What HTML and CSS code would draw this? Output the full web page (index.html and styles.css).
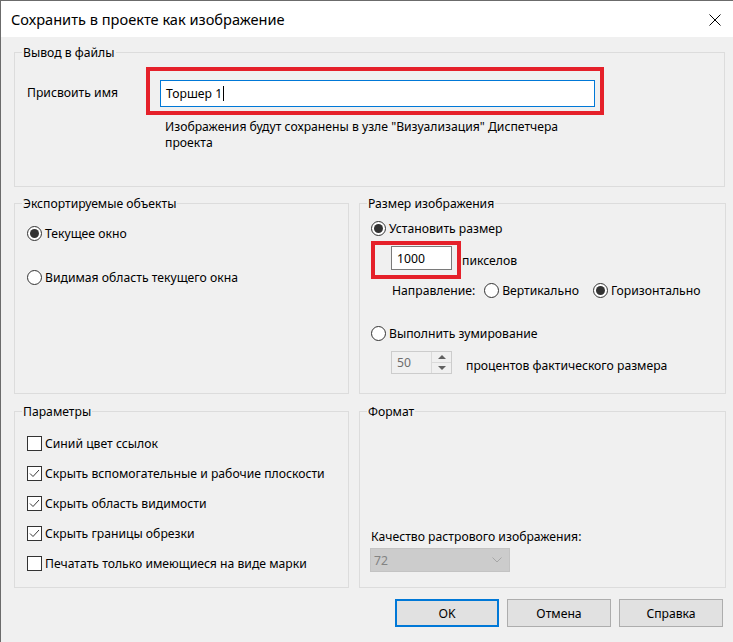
FILE: index.html
```html
<!DOCTYPE html>
<html lang="ru">
<head>
<meta charset="utf-8">
<title>Сохранить в проекте как изображение</title>
<link rel="stylesheet" href="styles.css">
</head>
<body>
<div class="window">
  <header class="titlebar">
    <span class="title">Сохранить в проекте как изображение</span>
    <svg class="close" width="12" height="12" viewBox="0 0 12 12"><path d="M0.5 0.5L11.5 11.5M11.5 0.5L0.5 11.5" stroke="#000" stroke-width="1" fill="none"/></svg>
  </header>
  <main class="content">
    <fieldset class="group group-output">
      <legend>Вывод в файлы</legend>
      <div class="output-body">
        <div class="name-row">
          <span class="name-label">Присвоить имя</span>
          <div class="hl hl-name">
            <div class="textbox name-box">Торшер 1<span class="caret"></span></div>
          </div>
        </div>
        <p class="hint">Изображения будут сохранены в узле "Визуализация" Диспетчера<br>проекта</p>
      </div>
    </fieldset>

    <div class="grid">
      <fieldset class="group">
        <legend>Экспортируемые объекты</legend>
        <div class="export-body">
          <div class="opt"><span class="radio checked"></span><span class="opt-text">Текущее окно</span></div>
          <div class="opt opt-second"><span class="radio"></span><span class="opt-text">Видимая область текущего окна</span></div>
        </div>
      </fieldset>

      <fieldset class="group">
        <legend>Размер изображения</legend>
        <div class="size-body">
          <div class="opt"><span class="radio checked"></span><span class="opt-text">Установить размер</span></div>
          <div class="px-row">
            <div class="hl hl-px"><div class="textbox px-box">1000</div></div>
            <span class="px-text">пикселов</span>
          </div>
          <div class="dir-row">
            <span class="dir-label">Направление:</span>
            <span class="radio dir-radio1"></span><span class="opt-text">Вертикально</span>
            <span class="radio checked dir-radio2"></span><span class="opt-text opt-horiz">Горизонтально</span>
          </div>
          <div class="opt zoom-opt"><span class="radio"></span><span class="opt-text">Выполнить зумирование</span></div>
          <div class="spin-row">
            <div class="spin">
              <span class="spin-val">50</span>
              <div class="spin-btns">
                <span class="spin-btn"><span class="tri-up"></span></span>
                <span class="spin-btn"><span class="tri-down"></span></span>
              </div>
            </div>
            <span class="spin-text">процентов фактического размера</span>
          </div>
        </div>
      </fieldset>

      <fieldset class="group">
        <legend>Параметры</legend>
        <div class="params-body">
          <div class="check-row"><span class="checkbox"></span><span class="opt-text">Синий цвет ссылок</span></div>
          <div class="check-row"><span class="checkbox"><svg width="13" height="13" viewBox="0 0 13 13"><path d="M2 6.5L5 9.5L11 3" stroke="#3a3a3a" stroke-width="1" fill="none"/></svg></span><span class="opt-text">Скрыть вспомогательные и рабочие плоскости</span></div>
          <div class="check-row"><span class="checkbox"><svg width="13" height="13" viewBox="0 0 13 13"><path d="M2 6.5L5 9.5L11 3" stroke="#3a3a3a" stroke-width="1" fill="none"/></svg></span><span class="opt-text">Скрыть область видимости</span></div>
          <div class="check-row"><span class="checkbox"><svg width="13" height="13" viewBox="0 0 13 13"><path d="M2 6.5L5 9.5L11 3" stroke="#3a3a3a" stroke-width="1" fill="none"/></svg></span><span class="opt-text">Скрыть границы обрезки</span></div>
          <div class="check-row"><span class="checkbox"></span><span class="opt-text">Печатать только имеющиеся на виде марки</span></div>
        </div>
      </fieldset>

      <fieldset class="group">
        <legend>Формат</legend>
        <div class="format-body">
          <div class="quality-label">Качество растрового изображения:</div>
          <div class="combo">
            <span class="combo-val">72</span>
            <svg class="chev" width="10" height="6" viewBox="0 0 10 6"><path d="M0.5 0.5L5 5L9.5 0.5" stroke="#a6a6a6" stroke-width="1" fill="none"/></svg>
          </div>
        </div>
      </fieldset>
    </div>

    <div class="buttons">
      <button class="btn btn-default">OK</button>
      <button class="btn">Отмена</button>
      <button class="btn">Справка</button>
    </div>
  </main>
</div>
</body>
</html>
```

FILE: styles.css
```css
* { box-sizing: border-box; }
html, body { margin: 0; padding: 0; }
body {
  width: 733px;
  height: 642px;
  overflow: hidden;
  background: #f0f0f0;
  font-family: "Noto Sans", "Open Sans", sans-serif;
  font-size: 12.2px;
  color: #000;
}
.window {
  width: 733px;
  height: 642px;
  border-top: 1px solid #6b6b6b;
  border-left: 1px solid #6b6b6b;
  background: #f0f0f0;
}
.titlebar {
  height: 36px;
  background: #fff;
  display: flex;
  align-items: center;
  justify-content: space-between;
  padding: 0 12px 0 10px;
}
.title { font-size: 14.6px; }
.close { display: block; margin-top: 1px; }

.content { padding: 8px 6px 0 13px; }

.group {
  margin: 0;
  padding: 0;
  border: 1px solid #dcdcdc;
  min-width: 0;
}
.group legend {
  margin-left: 7px;
  padding: 0 1px;
  line-height: 15px;
}
.group-output { margin-right: 2px; }

.output-body { padding: 7px 0 35px 11px; }
.name-row { display: flex; align-items: center; }
.name-label { width: 120px; padding-left: 1px; padding-top: 3px; }
.hl { border: 4px solid #e5202a; }
.hl-name { width: 458px; height: 48px; padding: 9px 5px 4px 10px; }
.textbox { background: #fff; display: flex; align-items: center; }
.name-box {
  height: 27px;
  border: 1px solid #0078d7;
  padding-left: 5px;
}
.caret { display: inline-block; width: 1px; height: 15px; background: #000; margin-left: 1px; }
.hint { margin: 4px 0 0 139px; line-height: 16px; }

.grid {
  margin-top: 9px;
  display: grid;
  grid-template-columns: 335px 367px;
  grid-template-rows: 198px 184px;
  column-gap: 10px;
  row-gap: 10px;
}

.opt { display: flex; align-items: center; height: 15px; }
.opt-text { margin-left: 3px; white-space: nowrap; }
.radio {
  flex: none;
  width: 15px;
  height: 15px;
  border: 1px solid #333;
  border-radius: 50%;
  background: #fff;
  display: inline-flex;
  align-items: center;
  justify-content: center;
}
.radio.checked::after {
  content: "";
  width: 9px;
  height: 9px;
  border-radius: 50%;
  background: #333;
}

.export-body { padding: 15px 0 0 12px; }
.opt-second { margin-top: 29px; }

.size-body { padding: 10px 0 0 11px; }
.px-row { display: flex; align-items: center; margin-top: 5px; }
.hl-px { width: 90px; height: 38px; padding: 1px 5px 5px 16px; }
.px-box { width: 61px; height: 24px; border: 1px solid #7a7a7a; padding-left: 5px; }
.px-text { margin-left: 1px; }
.dir-row { display: flex; align-items: center; height: 16px; margin: 3px 0 0 21px; }
.dir-label { margin-right: 9px; }
.dir-radio2 { margin-left: 14px; }
.zoom-opt { margin-top: 28px; }
.spin-row { display: flex; align-items: center; margin: 10px 0 0 20px; }
.spin {
  width: 61px;
  height: 23px;
  border: 1px solid #cccccc;
  display: flex;
}
.spin-val { flex: 1; color: #6d6d6d; padding-left: 5px; line-height: 21px; }
.spin-btns { width: 20px; display: flex; flex-direction: column; border-left: 1px solid #dadada; }
.spin-btn { flex: 1; display: flex; align-items: center; justify-content: center; }
.spin-btn + .spin-btn { border-top: 1px solid #dadada; }
.tri-up { width: 0; height: 0; border-left: 4px solid transparent; border-right: 4px solid transparent; border-bottom: 4px solid #606060; }
.tri-down { width: 0; height: 0; border-left: 4px solid transparent; border-right: 4px solid transparent; border-top: 4px solid #606060; }
.spin-text { margin: 5px 0 0 14px; }

.params-body { padding: 9px 0 0 12px; }
.check-row { display: flex; align-items: center; height: 30px; }
.checkbox {
  flex: none;
  width: 15px;
  height: 15px;
  border: 1px solid #333;
  background: #fff;
  display: inline-flex;
}

.format-body { padding: 110px 0 0 10px; }
.quality-label { line-height: 16px; margin: 0 0 3px 1px; }
.combo {
  width: 140px;
  height: 24px;
  background: #cccccc;
  border: 1px solid #c3c3c3;
  display: flex;
  align-items: center;
  justify-content: space-between;
  padding: 0 7px 0 3px;
}
.combo-val { color: #838383; }

.buttons {
  display: flex;
  justify-content: flex-end;
  gap: 8px;
  margin-top: 11px;
  padding-right: 4px;
}
.btn {
  width: 104px;
  height: 28px;
  margin: 0;
  background: #e1e1e1;
  border: 1px solid #adadad;
  font: inherit;
  color: #000;
  padding: 0;
}
.btn-default { border: 2px solid #0078d7; }
```
